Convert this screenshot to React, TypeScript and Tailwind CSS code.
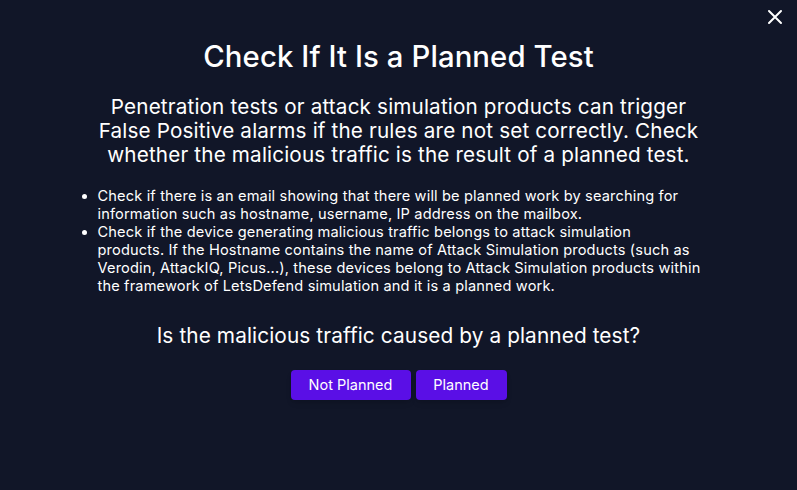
import React from 'react';

const App: React.FC = () => {
  return (
    <div
      className="relative min-h-screen w-full bg-[#111628] text-white"
      style={{ fontFamily: 'Inter, "Noto Sans", sans-serif' }}
    >
      {/* Close */}
      <button className="absolute right-[14px] top-[9px] text-white">
        <svg width="16" height="16" viewBox="0 0 16 16" fill="none">
          <path d="M2 2L14 14M14 2L2 14" stroke="currentColor" strokeWidth="2" strokeLinecap="round" />
        </svg>
      </button>

      <div className="flex flex-col items-center pt-[37px]">
        <h1 className="text-[29.3px] font-medium leading-[40px] tracking-[0.1px] text-white">Check If It Is a Planned Test</h1>

        <p className="mt-[18px] w-[630px] text-center text-[20.7px] leading-[24px] tracking-[0.15px] text-white">
          Penetration tests or attack simulation products can trigger False Positive alarms if the rules are not set correctly. Check whether the malicious traffic is the result of a planned test.
        </p>

        <ul className="mt-[20px] w-[640px] list-disc pl-[19px] text-[14.6px] leading-[18px] tracking-[0.15px] text-white">
          <li>
            Check if there is an email showing that there will be planned work by searching for information such as hostname, username, IP address on the mailbox.
          </li>
          <li>
            Check if the device generating malicious traffic belongs to attack simulation
            <br />
            products. If the Hostname contains the name of Attack Simulation products (such as Verodin, AttackIQ, Picus...), these devices belong to Attack Simulation products within the framework of LetsDefend simulation and it is a planned work.
          </li>
        </ul>

        <h2 className="mt-[28px] text-[20.8px] leading-[26px] tracking-[0.1px] text-white">Is the malicious traffic caused by a planned test?</h2>

        <div className="mt-[21px] flex gap-[5px]">
          <button className="h-[30px] w-[120px] rounded-[4px] bg-[#5a0fe6] text-[14.5px] text-white shadow-md">
            Not Planned
          </button>
          <button className="h-[30px] w-[91px] rounded-[4px] bg-[#5a0fe6] text-[14.5px] text-white shadow-md">
            Planned
          </button>
        </div>
      </div>
    </div>
  );
};

export default App;
